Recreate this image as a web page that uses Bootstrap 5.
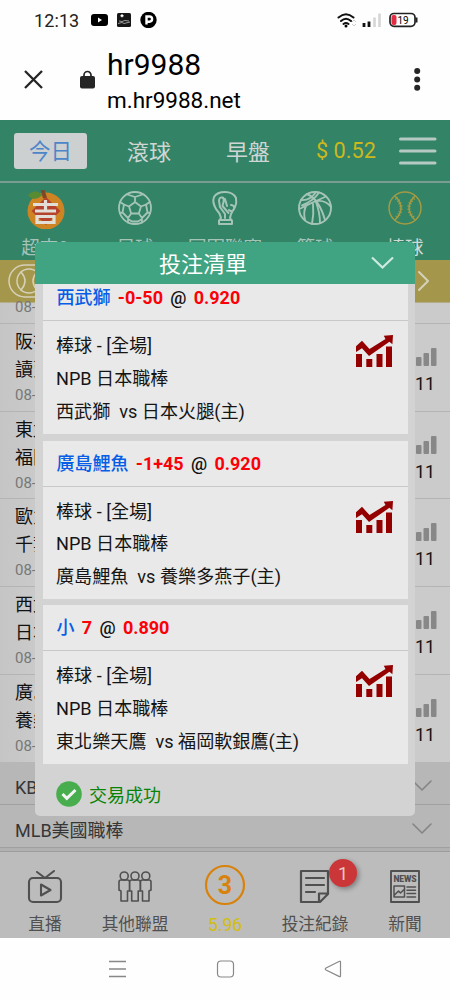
<!DOCTYPE html>
<html lang="zh-Hant">
<head>
<meta charset="utf-8">
<meta name="viewport" content="width=device-width, initial-scale=1">
<title>hr9988</title>
<link rel="stylesheet" href="https://cdn.jsdelivr.net/npm/bootstrap@5.3.0/dist/css/bootstrap.min.css">
<style>
body{font-family:Roboto,"Noto Sans CJK TC",sans-serif;font-size:18px;line-height:1.5;color:#111;background:#fefefe}
.screen{width:450px;height:1000px}
svg{display:block;flex:none}
.ln{fill:none;stroke:currentColor;stroke-linecap:round;stroke-linejoin:round}
.status{height:40px;padding:0 31px 0 34px}
.clock{font-size:18px;letter-spacing:.1px;width:57px;color:#222}
.addr{height:80px;padding-left:22px;padding-right:29px}
.addr h1{font-size:30px;line-height:34px;font-weight:400;margin:0;color:#000}
.addr p{font-size:22.5px;line-height:30px;margin:0;color:#000}
.top-tabs{height:63px;background:#338367;border-bottom:2px solid #7b9c90;color:#d0d6d3;font-size:22px}
.top-tabs>.tab-txt{padding-top:4px}
.today{width:73px;height:36px;background:#cdd0d1;color:#4c86c8;border-radius:3px;font-size:21.5px;margin-left:14px;padding-top:4px}
.money{color:#ccb81c;font-size:21.7px;padding-top:1px}
.sports{height:77px;background:#338367;color:#a5c4b8;padding-top:7px;font-size:18.5px}
.sports>div{width:90px;height:70px}
.sports span{line-height:24px;margin-top:8px;white-space:nowrap}
.gold{height:43px;background:#a4974c;border-bottom:1px solid #b5ae84;color:#d5d1b9}
.games{background:linear-gradient(90deg,#c5c5c5,#cacaca 8%,#cbcbcb)}
.game{height:87.7px;border-bottom:1px solid #b4b4b4;padding:4px 0 0 15px}
.game .tm{line-height:28px;white-space:nowrap}
.game .dt,.gfirst{font-size:15px;line-height:22px;color:#777}
.gfirst{height:21px;border-bottom:1px solid #b4b4b4;padding-left:15px;line-height:9px}
.cnt{width:34.5px;padding-top:20px;color:#888}
.cnt b{font-weight:400;color:#151515;line-height:24px;margin-top:6px;margin-left:-.5px}
.league{height:43px;background:#b7b7b7;border-bottom:1.5px solid #a0a0a0;padding:5px 18px 0 15px;color:#363636;font-size:18px}
.league span{padding-top:3px}
.league svg{color:#858585}
.seam{height:4px;background:#b1b1b1;border-bottom:1px solid #9c9c9c}
.dock{height:86px;background:#bcbcbc;color:#505050;font-size:16.7px}
.dock>div{width:90px;padding-top:13px}
.dock span{line-height:24px;margin-top:8px}
.bell{left:59px;top:7px;width:28px;height:28px;background:#cb3739;color:#e7caca;font-size:18px;box-shadow:2px 2px 5px #0005}
.sys{height:62px;color:#888;background:#fefefe}
.slip{left:35px;top:242px;width:380px;height:573.5px;background:#d3d3d3;border-radius:5px;overflow:hidden}
.slip-head{height:42px;background:#40a482;color:#fff;font-size:22px;padding-right:20px}
.bet{margin:0 7px 6.5px 7.5px;background:#e9e9e9;height:158.3px}
.bet.cut{height:150px}
.bet-t{height:46px;border-bottom:1px solid #c8c8c8;padding-left:14px;font-weight:700;color:#fb0007;white-space:pre;gap:7.3px}
.bet.cut .bet-t{height:37px;padding-bottom:9px}
.bet-t i{font-style:normal;font-weight:500;color:#075de6}
.bet-t em{font-style:normal;font-weight:500;color:#111}
.bet-b{padding:9px 15px 0 13.5px;line-height:32.8px;color:#151515;white-space:pre;font-size:18.1px}
.bet-b svg{margin-top:5px;color:#940000}
.ok-row{padding:6px 0 0 21px;color:#078307;height:54px}
</style>
</head>
<body>
<svg width="0" height="0" class="position-absolute">
<symbol id="trend" viewBox="0 0 37 32"><path fill="currentColor" d="M0 19h6v13H0zM10.3 24h6v8h-6zM20.5 19h6v13h-6zM30 11.5h6V32h-6zM0 11.3 6 5.8l7.500 8.300L29.500 4 27.800.7 37 0l-.6 9.300-3-2.500L13 21 6 13.200 0 17z"/></symbol>
<symbol id="bars" viewBox="0 0 21 18"><path fill="currentColor" d="M1 9h3.500q1 0 1 1v7q0 1-1 1H1q-1 0-1-1v-7q0-1 1-1zM8.500 5H12q1 0 1 1v11q0 1-1 1H8.500q-1 0-1-1V6q0-1 1-1zM16 0h3.500q1 0 1 1v16q0 1-1 1H16q-1 0-1-1V1q0-1 1-1z"/></symbol>
<symbol id="down" viewBox="0 0 20 12"><path class="ln" stroke-linejoin="miter" stroke-width="1.600" d="M1 1l9 9 9-9"/></symbol>
</svg>

<main class="screen position-relative overflow-hidden">
<div class="status d-flex align-items-center">
  <div class="clock">12:13</div>
  <svg width="66" height="16" viewBox="0 0 66 16"><rect y="2" width="17" height="12" rx="3"/><path d="M7 5.500v5l4-2.500z" fill="#fff"/><rect x="26" y="1" width="14" height="14" rx="1.500" fill="#161616"/><path d="M29.500 3.800h3M31 2.300v3" stroke="#fff" stroke-width="1.400"/><path d="M27 11.500l4-1 2 1 6-1.500M28 9l3 .5 3-1 4 .5" stroke="#999" stroke-width="1" fill="none"/><circle cx="57.500" cy="8" r="8.200"/><path d="M55.500 12.500V4.500h3a2.600 2.600 0 0 1 0 5.200h-3" fill="none" stroke="#fff" stroke-width="2.400"/></svg>
  <svg class="ms-auto" style="margin-right:1px" width="81" height="16" viewBox="0 0 81 16"><g class="ln" stroke-width="2" stroke="#111"><path d="M1.500 5.500q7.500-6.500 15 0M4 9q5-4.500 10 0M6.500 12q2.500-2 5 0"/></g><circle cx="9" cy="14" r="1.500"/><path d="M15 10l2-2 2 2M15 12l2 2 2-2" fill="none" stroke="#ccc"/><path d="M27 11v4M32 9.500V15" stroke="#111" stroke-width="2.800"/><path d="M37.500 5.500V15M42.500 1.500V15" stroke="#d5d5d5" stroke-width="2.600"/><rect x="53" y="1.500" width="25" height="12.800" rx="4" fill="#fff" stroke="#222" stroke-width="1.700"/><path d="M79.500 5.500v5" stroke="#222" stroke-width="2"/><rect x="54.500" y="3" width="5" height="10" rx="2" fill="#e32b41"/><text x="60.500" y="11.600" font-size="10">19</text></svg>
</div>
<div class="addr d-flex">
  <svg class="mt-4" width="22" height="30" viewBox="0 0 22 30"><path d="M3 7l17 17M20 7L3 24" stroke="#252525" stroke-width="2.300"/></svg>
  <svg style="margin:30px 0 0 36px" width="15" height="19" viewBox="0 0 15 19"><path d="M4 8V5a3.500 3.500 0 0 1 7 0v3" fill="none" stroke="#252525" stroke-width="1.700"/><rect y="6" width="15" height="12.500" rx="2" fill="#252525"/></svg>
  <div style="margin:8px 0 0 12px"><h1>hr9988</h1><p style="margin-top:3px">m.hr9988.net</p></div>
  <svg class="ms-auto" style="margin-top:27px" width="8" height="26" viewBox="0 0 8 26" fill="#252525"><circle cx="4.200" cy="4" r="3"/><circle cx="4.200" cy="12.400" r="3"/><circle cx="4.200" cy="20.700" r="3"/></svg>
</div>

<nav class="top-tabs d-flex align-items-center">
  <div class="today d-flex align-items-center justify-content-center">今日</div>
  <div class="tab-txt" style="margin-left:40px">滾球</div>
  <div class="tab-txt" style="margin-left:55px">早盤</div>
  <div class="money" style="margin-left:46px">$ 0.52</div>
  <svg class="ms-auto" style="margin-right:12px" width="40" height="32" viewBox="0 0 40 32"><path d="M2.500 4h34.500M2.500 16h34.500M2.500 28h34.500" stroke="#b6cac3" stroke-width="3" stroke-linecap="round"/></svg>
</nav>
<div class="sports d-flex">
  <div class="d-flex flex-column align-items-center">
    <svg width="40" height="39" viewBox="0 0 40 39"><circle cx="21" cy="21" r="18.500" fill="#cf8424"/><path d="M21 7l14.500 14L21 35 6.500 21z" fill="#b4422c"/><path d="M16.500 5q-7 6-12.500.5 5-6.500 12.500-.5" fill="#588b32" stroke="#588b32" stroke-width="1.500"/><path d="M17.500 0l2.500 8" stroke="#7b4928" stroke-width="4"/><path d="M8 14.500h25M20.500 10v10M10 21h21M12 26.500h17v6H12z" fill="none" stroke="#e3ded5" stroke-width="3.200"/></svg>
    <span style="margin-top:7px">超吉8</span>
  </div>
  <div class="d-flex flex-column align-items-center">
    <svg width="36" height="38" viewBox="0 0 36 38"><g class="ln" stroke-width="1.800"><circle cx="18" cy="18" r="16"/><path d="M18 12l6 4.500-2.200 7h-7.600L12 16.500zM18 12V7M24 16.500l5-2M21.800 23.500l3.200 4.500M14.200 23.500L11 28M12 16.500l-5-2M10.500 4.500L18 7l7.500-2.500M33 12l-4 2.500 1.500 8 2.500.5M25 28l5.500-5.500M25 28v4.500M11 28v4.500M11 28l-5.500-5.500M3 23l2.500-.5 1.500-8L3 12M11 29l4 2.500h6l4-2.500"/></g></svg><span>足球</span>
  </div>
  <div class="d-flex flex-column align-items-center">
    <svg width="36" height="38" viewBox="0 0 36 38"><g class="ln" stroke-width="2"><path d="M12 34v-3.500l2-2.500q-1-5-5-9-4-7-2-12 3-5 11-5 8 0 11 6 1 5-1 9l-4 7-1 4 2 2.500V34zM12.500 30h12M12 11q0-4 3.500-3.500 2 1 1 4.500l-1 4 6 7M12 11l1 6 5 7v4M20 16l-2-7M24 15a3 3 0 1 1-2 5"/></g></svg><span>冠軍聯賽</span>
  </div>
  <div class="d-flex flex-column align-items-center">
    <svg width="36" height="38" viewBox="0 0 36 38"><g class="ln" stroke-width="1.900"><circle cx="18" cy="18" r="16"/><path d="M4 10q9 1 15-8M2.500 19Q16 12 29 6.500M10 4q12 5 18 26M22 2.500q-5 8-17 13M16 14q1 10-1 20M9 16q-3 6-1 14M20 11q9-1 14 6M23 33q0-10-4-21"/></g></svg><span>籃球</span>
  </div>
  <div class="d-flex flex-column align-items-center">
    <svg width="36" height="38" viewBox="0 0 36 38" color="#a29b44"><g class="ln" stroke-width="1.500"><circle cx="18" cy="18" r="16"/><path d="M8 6q12 12 0 24M28 6q-12 12 0 24"/><path stroke-dasharray="1 2" stroke-width="3.500" stroke-linecap="butt" d="M9 8q10 10 0 20M27 8q-10 10 0 20"/></g></svg><span style="color:#d0dad6">棒球</span>
  </div>
</div>
<div class="gold d-flex align-items-center">
  <svg width="62" height="36" viewBox="0 0 62 36"><g class="ln" stroke-width="1.500"><rect x="9" y="2" width="70" height="32" rx="16"/><circle cx="29" cy="18" r="12"/><path d="M21 9q8 9 0 18M37 9q-8 9 0 18"/></g></svg>
  <svg class="ms-auto" style="margin-right:20px" width="14" height="24" viewBox="0 0 14 24"><path class="ln" stroke-width="2" stroke-linejoin="miter" d="M3 3l9 9-9 9"/></svg>
</div>

<section class="games">
  <div class="gfirst">08-03</div>
  <div class="game d-flex justify-content-between"><div><div class="tm">阪神</div><div class="tm">讀賣</div><div class="dt">08-03</div></div><div class="cnt d-flex flex-column"><svg width="21" height="18"><use href="#bars"/></svg><b>11</b></div></div>
  <div class="game d-flex justify-content-between"><div><div class="tm">東北</div><div class="tm">福岡</div><div class="dt">08-03</div></div><div class="cnt d-flex flex-column"><svg width="21" height="18"><use href="#bars"/></svg><b>11</b></div></div>
  <div class="game d-flex justify-content-between"><div><div class="tm">歐力</div><div class="tm">千葉</div><div class="dt">08-03</div></div><div class="cnt d-flex flex-column"><svg width="21" height="18"><use href="#bars"/></svg><b>11</b></div></div>
  <div class="game d-flex justify-content-between"><div><div class="tm">西武</div><div class="tm">日本</div><div class="dt">08-03</div></div><div class="cnt d-flex flex-column"><svg width="21" height="18"><use href="#bars"/></svg><b>11</b></div></div>
  <div class="game d-flex justify-content-between border-0"><div><div class="tm">廣島</div><div class="tm">養樂</div><div class="dt">08-03</div></div><div class="cnt d-flex flex-column"><svg width="21" height="18"><use href="#bars"/></svg><b>11</b></div></div>
</section>
<div class="league d-flex align-items-center justify-content-between"><span>KBO</span><svg width="20" height="12"><use href="#down"/></svg></div>
<div class="league d-flex align-items-center justify-content-between"><span>MLB美國職棒</span><svg width="20" height="12"><use href="#down"/></svg></div>
<div class="seam"></div>

<nav class="dock d-flex">
  <div class="d-flex flex-column align-items-center">
    <svg width="36" height="40" viewBox="0 0 36 40"><g class="ln" stroke-width="2.100"><rect x="2" y="13" width="32" height="24" rx="4"/><path d="M10 7l8 6 9-7M14 19.500v11l9.500-5.500z"/></g></svg><span>直播</span>
  </div>
  <div class="d-flex flex-column align-items-center">
    <svg width="36" height="40" viewBox="0 0 36 40"><g class="ln" stroke-width="1.600"><circle cx="7.200" cy="11" r="4"/><circle cx="18" cy="11" r="4"/><circle cx="28.800" cy="11" r="4"/><path d="M2 25v-8q0-2 2-2h6.500q2 0 2 2v8M4 26v10h6.500V26M12.700 25v-8q0-2 2-2h6.500q2 0 2 2v8M14.700 26v10h6.500V26M23.500 25v-8q0-2 2-2H32q2 0 2 2v8M25.500 26v10H32V26M2 25l2 1M10.500 26h4.200M21.200 26h4.300M32 26l2-1"/></g></svg><span>其他聯盟</span>
  </div>
  <div class="d-flex flex-column align-items-center" style="padding-top:12px">
    <svg width="42" height="42" viewBox="0 0 42 42"><circle cx="21" cy="21" r="19" fill="none" stroke="#d9820b" stroke-width="2.200"/><text x="21" y="29.500" text-anchor="middle" font-size="25" font-weight="700" fill="#d9820b">3</text></svg><span style="margin-top:7px;color:#d1bd13;font-size:17.500px">5.96</span>
  </div>
  <div class="d-flex flex-column align-items-center position-relative">
    <svg width="36" height="40" viewBox="0 0 36 40"><path class="ln" stroke-width="2.200" d="M4 6h27v23l-8 8H4zM22 37v-8.500h9M9 13h18M9 20h18M9 27h9"/></svg><span>投注紀錄</span>
    <div class="bell position-absolute rounded-circle d-flex align-items-center justify-content-center">1</div>
  </div>
  <div class="d-flex flex-column align-items-center">
    <svg width="36" height="40" viewBox="0 0 36 40"><g class="ln" stroke-width="1.900"><rect x="4" y="6" width="28" height="31"/><path stroke-width="1.500" d="M7 21h10.500v11H7zM7.500 30l4-4 2 2 3-3M20 22h8.500M20 25.300h8.500M20 28.600h8.500M20 32h8.500"/></g><text x="18" y="17" font-size="8.500" font-weight="900" fill="currentColor" text-anchor="middle" textLength="23">NEWS</text></svg><span>新聞</span>
  </div>
</nav>
<div class="sys d-flex align-items-center justify-content-center" style="gap:89px">
  <svg width="19" height="20" viewBox="0 0 19 20"><path d="M1 2.500h17M1 10h17M1 17.500h17" stroke="currentColor" stroke-width="1.400"/></svg>
  <svg width="19" height="20" viewBox="0 0 19 20"><rect class="ln" x="1.500" y="2" width="16" height="16" rx="3.500" stroke-width="1.200"/></svg>
  <svg width="19" height="20" viewBox="0 0 19 20"><path class="ln" stroke-width="1.200" d="M16.500 3v14q0 1-1 .6L2 11q-1.500-1 0-2L15.500 2.300q1-.3 1 .7"/></svg>
</div>

<div class="slip position-absolute">
  <div class="slip-head d-flex align-items-center"><div style="margin-left:124px;padding-top:3px">投注清單</div><svg class="ms-auto" width="25" height="16" viewBox="0 0 25 16"><path d="M2 2.500l10.500 10 10.500-10" fill="none" stroke="#cdebdf" stroke-width="2.200"/></svg></div>
  <div class="bet cut"><div class="bet-t d-flex align-items-center"><i>西武獅</i><span>-0-50</span><em>@</em><span>0.920</span></div>
    <div class="bet-b d-flex justify-content-between"><div>棒球 - [全場]
NPB 日本職棒
西武獅  vs 日本火腿(主)</div><svg width="37" height="32"><use href="#trend"/></svg></div></div>
  <div class="bet"><div class="bet-t d-flex align-items-center"><i>廣島鯉魚</i><span>-1+45</span><em>@</em><span>0.920</span></div>
    <div class="bet-b d-flex justify-content-between"><div>棒球 - [全場]
NPB 日本職棒
廣島鯉魚  vs 養樂多燕子(主)</div><svg width="37" height="32"><use href="#trend"/></svg></div></div>
  <div class="bet mb-0"><div class="bet-t d-flex align-items-center"><i>小</i><span>7</span><em>@</em><span>0.890</span></div>
    <div class="bet-b d-flex justify-content-between"><div>棒球 - [全場]
NPB 日本職棒
東北樂天鷹  vs 福岡軟銀鷹(主)</div><svg width="37" height="32"><use href="#trend"/></svg></div></div>
  <div class="ok-row d-flex align-items-center"><svg width="26" height="26" viewBox="0 0 26 26"><circle cx="13" cy="13" r="12.800" fill="#48ad4d"/><path d="M6.500 13l4.300 4.300L19.500 9" fill="none" stroke="#f4f4f4" stroke-width="3"/></svg><div style="margin-left:7px;padding-top:3px">交易成功</div></div>
</div>
</main>
<script src="https://cdn.jsdelivr.net/npm/bootstrap@5.3.0/dist/js/bootstrap.bundle.min.js"></script>
</body>
</html>
